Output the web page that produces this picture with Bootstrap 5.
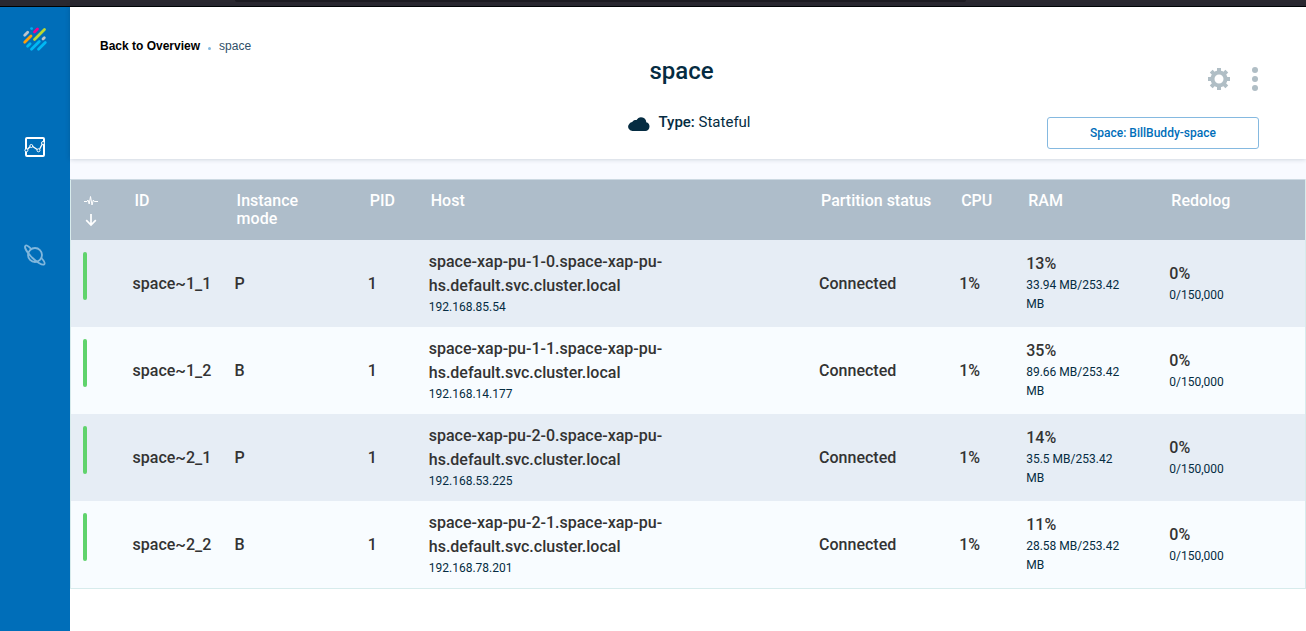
<!DOCTYPE html>
<html lang="en">
<head>
<meta charset="utf-8">
<meta name="viewport" content="width=device-width, initial-scale=1">
<title>space</title>
<link href="https://cdn.jsdelivr.net/npm/bootstrap@5.3.0/dist/css/bootstrap.min.css" rel="stylesheet">
<style>
  body { font-family: Roboto, "Liberation Sans", sans-serif; color: #052c42; }
  .window-edge { height: 7px; background: #2a2830; border-bottom: 1px solid #000; }
  .window-edge div { width: 56%; margin-left: 18%; height: 2px; background: #1c1b22; border-radius: 0 0 4px 4px; }
  .side { width: 70px; background: #006eb9; padding-top: 18px; }
  .side svg { display: block; }
  .side-logo { margin-bottom: 82px; }
  .side-link { margin-bottom: 84px; }
  .page-head { background: #fff; box-shadow: 0 0 5px rgba(0, 30, 60, .22); padding: 0 47px 0 30px; height: 152px; z-index: 1; }
  .crumbs { font: 12px/18px "Liberation Sans", sans-serif; padding-top: 30px; }
  .crumbs a { color: #000; font-weight: 700; }
  .crumbs .current { color: #2f4f68; }
  .crumb-dot { width: 3px; height: 3px; margin-top: 5px; background: #85b9e0; border-radius: 50%; }
  .head-grid { display: grid; grid-template-columns: 1fr 160px 1fr; padding-left: 4px; }
  .page-title { font-size: 24px; line-height: 32px; font-weight: 500; margin: 0 0 24px; }
  .kind { font-size: 15px; line-height: 22px; }
  .kind-label { font-weight: 500; }
  .head-actions { padding-top: 12px; }
  .icon-btn { border: 0; padding: 0; background: none; color: #b0bec5; line-height: 0; }
  .icon-pair { gap: 20px; }
  .space-btn { width: 212px; height: 32px; margin-top: 26px; padding: 0; border: 1px solid #85b9e0; border-radius: 3px; color: #006eb9; font-size: 12px; line-height: 18px; font-weight: 500; }
  .table-band { background: #f8faff; padding-top: 20px; }
  .instances { table-layout: fixed; border: 1px solid #d7ebec; border-top-color: #ccd9e2; font-size: 16px; font-weight: 500; }
  .instances th { height: 60px; padding: 12px 8px 0 14px; background: #aebdca; color: #fff; font-weight: 500; line-height: 18px; vertical-align: top; }
  .instances th.state-head { padding: 15px 0 0 13px; }
  .instances td { padding: 12px 8px 10px 12px; color: #333; line-height: 24px; vertical-align: middle; }
  .instances td.state { vertical-align: top; }
  .instances td.stacked { padding-top: 10px; }
  .instances tbody tr { background: #f8fcff; }
  .instances tbody tr:nth-child(odd) { background: #e6edf5; }
  .state-bar { width: 4px; height: 48px; border-radius: 2px; background: #60d36c; }
  .host-name { max-width: 256px; }
  .detail { font-size: 12px; line-height: 19px; font-weight: 400; color: #052c42; }
  .ram-detail { max-width: 104px; }
  .mode-head { max-width: 80px; }
</style>
</head>
<body class="bg-white">
<div class="d-flex flex-column min-vh-100">
  <div class="window-edge"><div></div></div>
  <div class="d-flex flex-grow-1">
    <nav class="side d-flex flex-column align-items-center flex-shrink-0" aria-label="Main">
      <a class="side-logo" href="#" aria-label="Home">
        <svg width="28" height="28" viewBox="0 0 28 28" fill="none" stroke-width="2.8" stroke-linecap="round">
          <path d="M3.700 10.200l3-3M22 14l1.300-1.300" stroke="#bcc5cd"/>
          <path d="M10.600 3.600h.01" stroke="#00aeef"/>
          <path d="M13.500 7l3-3" stroke="#f5008b"/>
          <path d="M13.500 14.500L23.500 4.500" stroke="#bcd92f"/>
          <path d="M3.700 17.300l6.300-6.300" stroke="#ff9e0a"/>
          <path d="M6.600 21.300l2.500-2.500M10.500 24.300l7.800-7.800M17.500 24.300l6.800-6.800" stroke="#00b8f4"/>
        </svg>
      </a>
      <a class="side-link" href="#" aria-label="Monitoring">
        <svg width="24" height="24" viewBox="0 0 24 24" fill="none" stroke="#fff">
          <rect x="3" y="3" width="18" height="18" rx="1" stroke-width="2"/>
          <path d="M4.500 14.200l2.500-2.500M9.700 11.500l4.500 3M16.700 14l2.600-5" stroke-width="1.400"/>
          <g fill="#006eb9"><circle cx="3.400" cy="15.300" r="1.500"/><circle cx="8.300" cy="11" r="1.500"/><circle cx="15.500" cy="15.300" r="1.500"/><circle cx="20" cy="8" r="1.500"/></g>
        </svg>
      </a>
      <a href="#" aria-label="Spaces">
        <svg width="24" height="24" viewBox="0 0 24 24" fill="none" stroke="#80b7dd" stroke-width="1.800">
          <circle cx="12" cy="12" r="7"/>
          <path d="M8 5.800C5.500 3.300 3.200 2 2.400 2.800C1 4.200 4.500 9.800 9 14.500C13.800 19.200 19.600 22.800 21.200 21.300C22.200 20.300 20.700 17.500 18.300 15"/>
        </svg>
      </a>
    </nav>
    <main class="flex-grow-1">
      <header class="page-head position-relative">
        <div class="crumbs d-flex align-items-center">
          <a class="text-decoration-none" href="#">Back to Overview</a>
          <span class="crumb-dot mx-2"></span>
          <span class="current">space</span>
        </div>
        <div class="head-grid">
          <div></div>
          <div class="text-center">
            <h1 class="page-title">space</h1>
            <div class="kind d-flex align-items-center justify-content-center ps-3">
              <svg class="me-2 mt-1" width="22" height="14" viewBox="0 0 22 14" fill="#052c42" aria-hidden="true"><path d="M4.500 14A4.300 4.300 0 0 1 1.200 6.900C2 5.500 3.200 5.100 4.300 4.900C5.300 3.200 7.200 2.800 8.600 3.100C10-.1 13.500-.6 16 1.100C17.800 2.300 18.300 4 18.200 5.300C20.400 5.900 21.500 7.400 21.500 9.500C21.500 12.200 19.700 14 17.300 14Z"/></svg>
              <span><span class="kind-label">Type:</span> Stateful</span>
            </div>
          </div>
          <div class="head-actions d-flex flex-column align-items-end">
            <div class="icon-pair d-flex align-items-center">
              <button class="icon-btn" type="button" aria-label="Settings">
                <svg width="24" height="24" viewBox="0 0 24 24" fill="none" stroke="currentColor">
                  <circle cx="12" cy="12" r="6.500" stroke-width="4"/>
                  <path d="M12 1v4M12 19v4M1 12h4M19 12h4M4.200 4.200L7 7M17 17l2.800 2.800M19.800 4.200L17 7M7 17l-2.800 2.800" stroke-width="4"/>
                </svg>
              </button>
              <button class="icon-btn" type="button" aria-label="More">
                <svg width="8" height="24" viewBox="0 0 8 24" fill="currentColor"><circle cx="4" cy="3" r="3"/><circle cx="4" cy="12" r="3"/><circle cx="4" cy="21" r="3"/></svg>
              </button>
            </div>
            <button class="btn space-btn" type="button">Space: BillBuddy-space</button>
          </div>
        </div>
      </header>
      <section class="table-band">
        <table class="instances w-100">
          <colgroup>
            <col width="50"><col width="102"><col width="133"><col width="61"><col width="390"><col width="140"><col width="67"><col width="143"><col width="148">
          </colgroup>
          <thead>
            <tr>
              <th class="state-head" scope="col" aria-label="State">
                <svg width="14" height="33" viewBox="0 0 14 33" fill="none" stroke="#fff"><path d="M0 6.500h3l1-1.500 1.200 4L6.500 1.500 8 10l1.300-5 1 1.500H14"/><path d="M7 19v11M2.200 25.200L7 30l4.800-4.800" stroke-width="1.700"/></svg>
              </th>
              <th scope="col">ID</th><th scope="col"><div class="mode-head">Instance mode</div></th><th scope="col">PID</th><th scope="col">Host</th><th scope="col" class="text-nowrap">Partition status</th><th scope="col">CPU</th><th scope="col">RAM</th><th scope="col">Redolog</th>
            </tr>
          </thead>
          <tbody>
            <tr>
              <td class="state"><div class="state-bar"></div></td><td>space~1_1</td><td>P</td><td>1</td>
              <td class="stacked"><div class="host-name">space-xap-pu-1-0.space-xap-pu-hs.default.svc.cluster.local</div><div class="detail">192.168.85.54</div></td>
              <td>Connected</td><td>1%</td>
              <td class="stacked">13%<div class="detail ram-detail">33.94 MB/253.42 MB</div></td>
              <td class="stacked">0%<div class="detail">0/150,000</div></td>
            </tr>
            <tr>
              <td class="state"><div class="state-bar"></div></td><td>space~1_2</td><td>B</td><td>1</td>
              <td class="stacked"><div class="host-name">space-xap-pu-1-1.space-xap-pu-hs.default.svc.cluster.local</div><div class="detail">192.168.14.177</div></td>
              <td>Connected</td><td>1%</td>
              <td class="stacked">35%<div class="detail ram-detail">89.66 MB/253.42 MB</div></td>
              <td class="stacked">0%<div class="detail">0/150,000</div></td>
            </tr>
            <tr>
              <td class="state"><div class="state-bar"></div></td><td>space~2_1</td><td>P</td><td>1</td>
              <td class="stacked"><div class="host-name">space-xap-pu-2-0.space-xap-pu-hs.default.svc.cluster.local</div><div class="detail">192.168.53.225</div></td>
              <td>Connected</td><td>1%</td>
              <td class="stacked">14%<div class="detail ram-detail">35.5 MB/253.42 MB</div></td>
              <td class="stacked">0%<div class="detail">0/150,000</div></td>
            </tr>
            <tr>
              <td class="state"><div class="state-bar"></div></td><td>space~2_2</td><td>B</td><td>1</td>
              <td class="stacked"><div class="host-name">space-xap-pu-2-1.space-xap-pu-hs.default.svc.cluster.local</div><div class="detail">192.168.78.201</div></td>
              <td>Connected</td><td>1%</td>
              <td class="stacked">11%<div class="detail ram-detail">28.58 MB/253.42 MB</div></td>
              <td class="stacked">0%<div class="detail">0/150,000</div></td>
            </tr>
          </tbody>
        </table>
      </section>
    </main>
  </div>
</div>
<script src="https://cdn.jsdelivr.net/npm/bootstrap@5.3.0/dist/js/bootstrap.bundle.min.js"></script>
</body>
</html>
